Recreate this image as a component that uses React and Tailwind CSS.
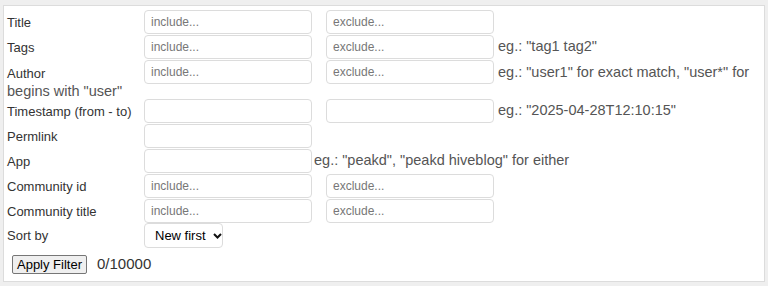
import React from 'react'

const Field = ({ placeholder = '', className = '' }) => (
  <input
    type="text"
    placeholder={placeholder}
    className={`h-[24px] w-[168px] shrink-0 rounded-[4px] border border-[#dcdcdc] bg-white px-[6px] text-[12px] text-[#333] placeholder:text-[#777] outline-none ${className}`}
  />
)

const Label = ({ children }) => (
  <span className="inline-block w-[137px] shrink-0 text-[13px] text-[#333]">{children}</span>
)

const Hint = ({ children, className = '' }) => (
  <span className={`text-[14.5px] text-[#555] ${className}`}>{children}</span>
)

const Row = ({ children }) => <div className="flex h-[25px] items-start">{children}</div>

const App = () => {
  return (
    <div className="min-h-[286px] bg-[#efefef] pl-[3px] pr-[3px] pt-[5px] pb-[4px] font-['Liberation_Sans',Arial,sans-serif]">
      <div className="border border-[#dcdcdc] bg-white pl-[3px] pt-[4px] pb-[8px] h-[277px]">
        <Row>
          <div className="flex h-[24px] items-center pt-[1px]"><Label>Title</Label></div>
          <Field placeholder="include..." />
          <Field placeholder="exclude..." className="ml-[14px]" />
        </Row>
        <Row>
          <div className="flex h-[24px] items-center pt-[1px]"><Label>Tags</Label></div>
          <Field placeholder="include..." />
          <Field placeholder="exclude..." className="ml-[14px]" />
          <div className="flex h-[24px] items-center">
            <Hint className="ml-[4px]">eg.: "tag1 tag2"</Hint>
          </div>
        </Row>

        {/* author hint wraps back to the left edge */}
        <div className="pb-[1px] leading-[16px]">
          <span className="inline-block h-[24px] align-top pt-[1px] leading-[24px]"><Label>Author</Label></span>
          <Field placeholder="include..." className="inline-block align-top" />
          <Field placeholder="exclude..." className="ml-[14px] inline-block align-top" />
          <Hint className="ml-[4px] leading-[24px]">eg.: "user1" for exact match, "user*" for</Hint>
          <div className="-mt-[1px] h-[15px] leading-[15px]">
            <Hint>begins with "user"</Hint>
          </div>
        </div>

        <Row>
          <div className="flex h-[24px] items-center pt-[1px]"><Label>Timestamp (from - to)</Label></div>
          <Field />
          <Field className="ml-[14px]" />
          <div className="flex h-[24px] items-center">
            <Hint className="ml-[4px]">eg.: "2025-04-28T12:10:15"</Hint>
          </div>
        </Row>
        <Row>
          <div className="flex h-[24px] items-center pt-[1px]"><Label>Permlink</Label></div>
          <Field />
        </Row>
        <Row>
          <div className="flex h-[24px] items-center pt-[1px]"><Label>App</Label></div>
          <Field />
          <div className="flex h-[24px] items-center">
            <Hint className="ml-[2px]">eg.: "peakd", "peakd hiveblog" for either</Hint>
          </div>
        </Row>
        <Row>
          <div className="flex h-[24px] items-center pt-[1px]"><Label>Community id</Label></div>
          <Field placeholder="include..." />
          <Field placeholder="exclude..." className="ml-[14px]" />
        </Row>
        <Row>
          <div className="flex h-[24px] items-center pt-[1px]"><Label>Community title</Label></div>
          <Field placeholder="include..." />
          <Field placeholder="exclude..." className="ml-[14px]" />
        </Row>
        <div className="-mt-[1px] flex h-[25px] items-start">
          <div className="flex h-[25px] items-center"><Label>Sort by</Label></div>
          <div className="flex h-[25px] w-[79px] shrink-0 items-center gap-[7px] rounded-[4px] border border-[#dcdcdc] bg-white pl-[10px]">
            <span className="whitespace-nowrap text-[13px] text-black">New first</span>
            <svg width="9" height="6" viewBox="0 0 9 6">
              <path d="M1 1 L4.5 4.5 L8 1" fill="none" stroke="#111" strokeWidth="2" />
            </svg>
          </div>
        </div>
        <div className="mt-[5px] flex items-center">
          <button className="ml-[5px] h-[19px] w-[75px] rounded-[2px] border border-[#767676] bg-[#efefef] text-[13px] leading-none text-black">
            Apply Filter
          </button>
          <span className="ml-[10px] text-[15px] text-[#333]">0/10000</span>
        </div>
      </div>
    </div>
  )
}

export default App
